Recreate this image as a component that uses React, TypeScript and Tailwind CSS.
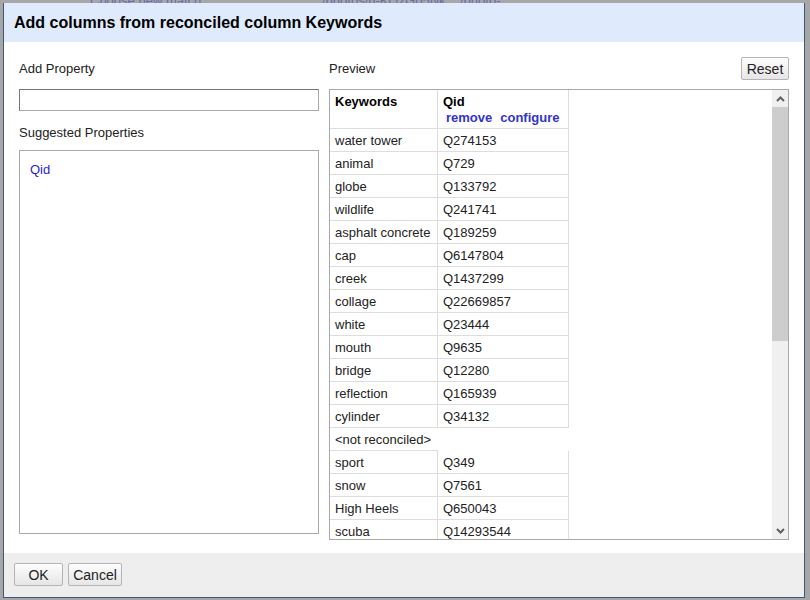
const rows: [string, string | null][] = [
  ['water tower', 'Q274153'],
  ['animal', 'Q729'],
  ['globe', 'Q133792'],
  ['wildlife', 'Q241741'],
  ['asphalt concrete', 'Q189259'],
  ['cap', 'Q6147804'],
  ['creek', 'Q1437299'],
  ['collage', 'Q22669857'],
  ['white', 'Q23444'],
  ['mouth', 'Q9635'],
  ['bridge', 'Q12280'],
  ['reflection', 'Q165939'],
  ['cylinder', 'Q34132'],
  ['<not reconciled>', null],
  ['sport', 'Q349'],
  ['snow', 'Q7561'],
  ['High Heels', 'Q650043'],
  ['scuba', 'Q14293544'],
];

const btn =
  'h-[23px] rounded-[2px] border border-[#b5b5b5] bg-gradient-to-b from-[#fdfdfd] to-[#e6e6e6] text-[14px] text-[#222] leading-none';

function Scrollbar() {
  return (
    <div className="flex w-[16px] flex-col bg-[#f0f0f0]">
      <div className="flex h-[17px] items-center justify-center">
        <svg width="9" height="6" viewBox="0 0 9 6">
          <path d="M1 5 L4.5 1.5 L8 5" stroke="#606060" strokeWidth="2" fill="none" />
        </svg>
      </div>
      <div className="h-[234px] bg-[#cdcdcd]" />
      <div className="flex-1" />
      <div className="flex h-[17px] items-center justify-center">
        <svg width="9" height="6" viewBox="0 0 9 6">
          <path d="M1 1 L4.5 4.5 L8 1" stroke="#606060" strokeWidth="2" fill="none" />
        </svg>
      </div>
    </div>
  );
}

export default function App() {
  return (
    <div
      className="relative h-[600px] w-[810px] overflow-hidden bg-[#a7a7a7]"
      style={{ fontFamily: '"Liberation Sans", Arial, sans-serif' }}
    >
      {/* page behind the dialog peeking out at the top */}
      <div className="absolute left-[90px] top-[-9px] text-[13px] text-[#6a6ab0]">Choose new match</div>
      <div className="absolute left-[322px] top-[-9px] text-[13px] text-[#6a6ab0]">/photos/h-KcIzGo5Nk</div>
      <div className="absolute left-[460px] top-[-9px] text-[13px] text-[#6a6ab0]">/photo-</div>

      <div className="absolute left-[3px] top-[3px] flex h-[595px] w-[802px] flex-col border-x border-b border-[#3b5876] bg-white">
        {/* header */}
        <div className="flex h-[39px] items-center bg-[#dfebfc] pl-[10px] text-[16px] font-bold text-black">
          Add columns from reconciled column Keywords
        </div>

        {/* body */}
        <div className="flex flex-1 gap-[10px] pl-[15px] pt-[15px] text-[13px] text-[#222]">
          <div className="flex w-[300px] flex-col">
            <div className="flex h-[23px] items-center">Add Property</div>
            <input className="mt-[9px] h-[22px] w-[300px] border border-[#a9a9a9] border-l-[#767676] border-t-[#767676] outline-none" />
            <div className="mt-[14px] leading-[16px]">Suggested Properties</div>
            <div className="mt-[9px] h-[384px] border border-[#a9a9a9] px-[10px] pt-[9px]">
              <span className="text-[#2a22d0]">Qid</span>
            </div>
          </div>

          <div className="flex w-[460px] flex-col">
            <div className="flex h-[23px] items-center justify-between">
              <span>Preview</span>
              <button className={`${btn} w-[48px]`}>Reset</button>
            </div>
            <div className="mt-[9px] flex h-[451px] overflow-hidden border border-[#a9a9a9]">
              <div className="flex-1 overflow-hidden">
                <div className="flex w-[239px] border-b border-[#dddddd]">
                  <div className="w-[108px] border-r border-[#dddddd] px-[5px] pt-[4px] font-bold leading-[16px] text-black">
                    Keywords
                  </div>
                  <div className="h-[38px] w-[131px] border-r border-[#dddddd] pl-[5px] pt-[4px] font-bold leading-[16px] text-black">
                    <div>Qid</div>
                    <div className="flex gap-[8px] pl-[3px] text-[#3333cc]">
                      <span>remove</span>
                      <span>configure</span>
                    </div>
                  </div>
                </div>
                {rows.map(([k, q], i) =>
                  q === null ? (
                    <div key={i} className="flex w-[239px]">
                      <div className="h-[23px] w-[108px] border-b border-[#dddddd] px-[5px] pt-[4px] leading-[16px]">
                        {k}
                      </div>
                    </div>
                  ) : (
                    <div key={i} className="flex w-[239px]">
                      <div className="h-[23px] w-[108px] border-b border-r border-[#dddddd] px-[5px] pt-[4px] leading-[16px]">
                        {k}
                      </div>
                      <div className="h-[23px] w-[131px] border-b border-r border-[#dddddd] px-[5px] pt-[4px] leading-[16px]">
                        {q}
                      </div>
                    </div>
                  )
                )}
              </div>
              <Scrollbar />
            </div>
          </div>
        </div>

        {/* footer */}
        <div className="flex h-[44px] gap-[5px] bg-[#eeeeee] pl-[10px] pt-[10px]">
          <button className={`${btn} w-[49px]`}>OK</button>
          <button className={`${btn} w-[54px]`}>Cancel</button>
        </div>
      </div>
    </div>
  );
}
